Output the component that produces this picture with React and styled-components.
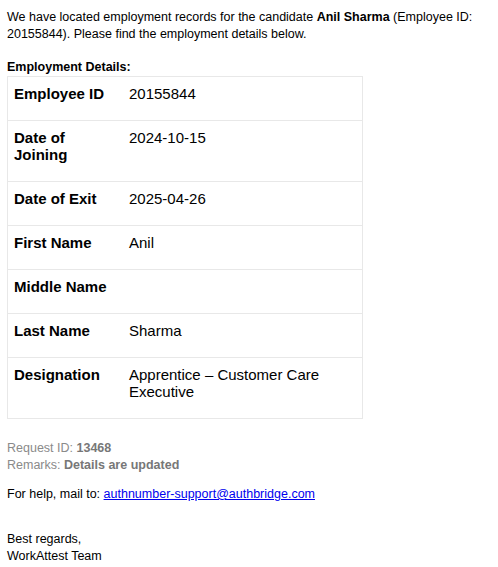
import React from "react";
import styled, { createGlobalStyle } from "styled-components";

const GlobalStyle = createGlobalStyle`
  body {
    margin: 0;
    background: #fff;
    font-family: "Liberation Sans", Arial, sans-serif;
    color: #000;
  }
`;

const Mail = styled.div`
  padding: 9px 7px;
  font-size: 12.5px;
  line-height: 17px;
`;

const Para = styled.p`
  margin: ${(p) => p.$top || 0}px 0 ${(p) => p.$gap || 0}px;
`;

const Heading = styled.div`
  font-weight: bold;
`;

const Table = styled.table`
  width: 356px;
  table-layout: fixed;
  border-collapse: collapse;
  border: 1px solid #e8e8e8;
  margin-bottom: 21px;
`;

const Row = styled.tr`
  border-bottom: 1px solid #e8e8e8;
`;

const Cell = styled.td`
  vertical-align: top;
  padding: 8px 6px 18px;
  font-size: 15px;
  line-height: 17px;
  font-weight: ${(p) => (p.$label ? "bold" : "normal")};
  width: ${(p) => (p.$label ? "103px" : "auto")};
`;

const Meta = styled.div`
  color: #8a8a8a;
  b {
    color: #777;
  }
`;

const Link = styled.a`
  color: #0000ee;
  text-decoration: underline;
`;

const rows = [
  ["Employee ID", "20155844"],
  ["Date of Joining", "2024-10-15"],
  ["Date of Exit", "2025-04-26"],
  ["First Name", "Anil"],
  ["Middle Name", ""],
  ["Last Name", "Sharma"],
  ["Designation", "Apprentice – Customer Care Executive"],
];

export default function App() {
  return (
    <>
      <GlobalStyle />
      <Mail>
        <Para $gap={16}>
          We have located employment records for the candidate{" "}
          <b>Anil Sharma</b> (Employee ID: 20155844). Please find the
          employment details below.
        </Para>
        <Heading>Employment Details:</Heading>
        <Table>
          <tbody>
            {rows.map(([k, v]) => (
              <Row key={k}>
                <Cell $label>{k}</Cell>
                <Cell>{v}</Cell>
              </Row>
            ))}
          </tbody>
        </Table>
        <Meta>
          Request ID: <b>13468</b>
          <br />
          Remarks: <b>Details are updated</b>
        </Meta>
        <Para $top={12} $gap={28}>
          For help, mail to:{" "}
          <Link href="mailto:authnumber-support@authbridge.com">
            authnumber-support@authbridge.com
          </Link>
        </Para>
        <Para>
          Best regards,
          <br />
          WorkAttest Team
        </Para>
      </Mail>
    </>
  );
}
